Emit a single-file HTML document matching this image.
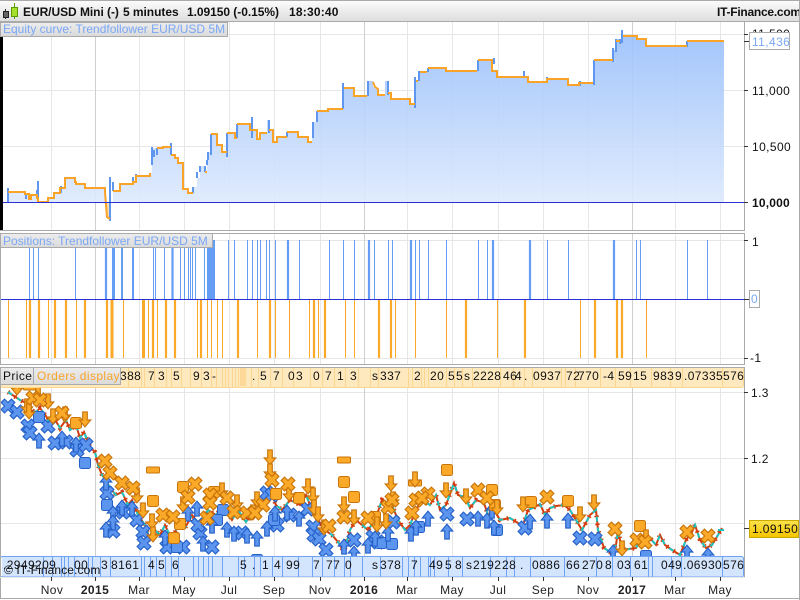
<!DOCTYPE html>
<html><head><meta charset="utf-8"><style>
html,body{margin:0;padding:0;background:#fff}
svg{display:block}
text{font-family:"Liberation Sans",sans-serif;font-size:12px;letter-spacing:.4px}
.chip text{fill:#111}
.tb{font-size:12px;font-weight:bold;letter-spacing:-.05px}
.tab{letter-spacing:0}
</style></head><body>
<svg width="800" height="600" viewBox="0 0 800 600" xmlns="http://www.w3.org/2000/svg">
<defs>
<linearGradient id="bar" x1="0" y1="0" x2="0" y2="1"><stop offset="0" stop-color="#fdfdfd"/><stop offset="1" stop-color="#dcdcdc"/></linearGradient>
<linearGradient id="tabg" x1="0" y1="0" x2="0" y2="1"><stop offset="0" stop-color="#ededed"/><stop offset="1" stop-color="#dadada"/></linearGradient>
<linearGradient id="eq" gradientUnits="userSpaceOnUse" x1="0" y1="31" x2="0" y2="202"><stop offset="0" stop-color="#98bffb" stop-opacity=".9"/><stop offset="1" stop-color="#dde9fd" stop-opacity=".9"/></linearGradient>
<linearGradient id="yel" x1="0" y1="0" x2="0" y2="1"><stop offset="0" stop-color="#fde24a"/><stop offset="1" stop-color="#f4c400"/></linearGradient>
<g id="oX" transform="scale(1.15)"><path d="M-3-6L0-3 3-6 6-3 3 0 6 3 3 6 0 3-3 6-6 3-3 0-6-3Z" fill="#fba928" stroke="#c8740a"/></g>
<g id="bX" transform="scale(1.15)"><path d="M-3-6L0-3 3-6 6-3 3 0 6 3 3 6 0 3-3 6-6 3-3 0-6-3Z" fill="#5c95ee" stroke="#2560c8"/></g>
<g id="oD" transform="scale(1.15)"><path d="M-2-7H2V0H5L0 6-5 0H-2Z" fill="#fba928" stroke="#c8740a"/></g>
<g id="bU" transform="scale(1.15)"><path d="M-2 7H2V0H5L0-6-5 0H-2Z" fill="#5c95ee" stroke="#2560c8"/></g>
<g id="oS"><rect x="-5.5" y="-5.5" width="11" height="11" rx="2" fill="#fba928" stroke="#c8740a"/></g>
<g id="bS"><rect x="-5.5" y="-5.5" width="11" height="11" rx="2" fill="#5c95ee" stroke="#2560c8"/></g>
<g id="oF"><rect x="-6.5" y="-3" width="13" height="6" rx="1" fill="#fba928" stroke="#c8740a"/></g>
<path id="ps" fill="none" d="M8 392L14 396 20 400 26 403 30 410 36 412 40 408 46 416 50 425 54 418 60 428 66 420 70 430 76 425 80 438 84 432 90 447 95 452 98 465 102 475 106 480 110 488 116 495 122 492 128 505 132 500 138 515 145 525 150 540 155 530 160 535 165 525 172 540 178 525 185 528 192 515 200 525 208 510 216 515 224 505 232 520 238 510 246 522 252 512 258 515 264 500 270 490 276 505 282 510 290 500 300 505 306 495 312 510 318 520 325 530 332 535 338 542 344 552 350 530 356 520 362 525 368 530 375 520 382 500 392 505 398 520 405 530 410 525 416 510 422 500 430 505 436 495 440 510 446 505 454 483 458 495 465 497 470 508 476 500 484 503 488 515 494 510 500 520 510 518 518 523 523 525 528 510 535 507 540 504 545 515 550 508 556 506 564 505 570 510 576 520 582 530 590 515 596 510 598 530 604 548 610 552 616 545 618 530 622 550 636 548 640 540 650 538 656 545 660 535 665 545 672 550 680 555 686 540 692 532 695 525 700 540 706 548 712 545 718 535 722 528"/>
<clipPath id="pc"><rect x="0" y="386" width="744" height="171"/></clipPath>
</defs>

<!-- top bar -->
<rect x="0" y="0" width="800" height="22" fill="url(#bar)"/>
<rect x="0" y="0" width="800" height="1" fill="#aaa"/>
<rect x="0" y="21" width="800" height="1" fill="#aaa"/>
<path d="M5.5 9V19" stroke="#333"/><rect x="3.5" y="11.5" width="5" height="6" fill="#666" stroke="#222"/>
<path d="M14.5 3V19" stroke="#5a9c00"/><rect x="11.5" y="7.5" width="6" height="9" fill="#a6e02a" stroke="#5a9c00"/>
<text x="23" y="16" class="tb" fill="#111">EUR/USD Mini (-)</text>
<text x="123" y="16" class="tb" fill="#111">5 minutes</text>
<text x="187" y="16" class="tb" fill="#111">1.09150 (-0.15%)</text>
<text x="289" y="16" class="tb" fill="#111" style="letter-spacing:.2px">18:30:40</text>
<text x="717" y="16" style="font-size:12px;font-weight:bold;letter-spacing:-.25px" fill="#111">IT-Finance.com</text>

<!-- grids -->
<g stroke="#e6e6e6" fill="none">
<path d="M51.5 22V230M139.5 22V230M184.5 22V230M229.5 22V230M274.5 22V230M320.5 22V230M407.5 22V230M452.5 22V230M498.5 22V230M543.5 22V230M588.5 22V230M675.5 22V230M720.5 22V230"/>
<path d="M51.5 233V364M139.5 233V364M184.5 233V364M229.5 233V364M274.5 233V364M320.5 233V364M407.5 233V364M452.5 233V364M498.5 233V364M543.5 233V364M588.5 233V364M675.5 233V364M720.5 233V364"/>
<path d="M51.5 367V577M139.5 367V577M184.5 367V577M229.5 367V577M274.5 367V577M320.5 367V577M407.5 367V577M452.5 367V577M498.5 367V577M543.5 367V577M588.5 367V577M675.5 367V577M720.5 367V577"/>
<path d="M0 34.5H744M0 90.5H744M0 146.5H744M0 240.5H744M0 358.5H744M0 392.5H744M0 458.5H744M0 523.5H744"/>
</g>
<g stroke="#cfcfcf" fill="none"><path d="M95.5 22V230M364.5 22V230M632.5 22V230M95.5 233V364M364.5 233V364M632.5 233V364M95.5 367V577M364.5 367V577M632.5 367V577"/></g>

<!-- equity area -->
<path d="M2 202H8V192H25V194H29V199H31V195H37V198H38V202H48V198H54V193H60V188H65V178H75V182H76V184H85V188H105V192L106 205 107 217 110 219V202H113V191H120V184H133V182H136V175H150V173H152V148H163V147H171V155H175V158H178V163H183V189H188V193H193V187H197V178H200V166H205V172H207V160H208V152H211V134H217V145H222V152H227V133H235V138H237V124H250V130H257V139H260V133H267V120H270V130H273V142H277V137H287V132H298V137H308V142H312V122H317V111H328V109H343V83H344V88H354V96H367V81H373V87H375V89H378V95H385V81H388V93H391V99H410V104H415V77H416V81H418V71H420V72H427V68H446V71H477V60H492V71H497V77H528V82H547V79H568V85H579V83H593V60H613V50H616V39H620V41H622V31H623V36H637V39H646V46H687V41H724V202Z" fill="url(#eq)"/>
<path d="M105 202L106 205 107 217 110 219V202Z" fill="#fbdcae"/>
<!-- blue rises -->
<path d="M8 202V188M26 199V194M37 197V190M38 199V181M48 203V197M54 198V193M61 193V186M65 188V178M110 221V177M113 191V182M120 191V184M133 184V177M136 182V174M152 165V147M154 157V150M157 155V148M171 155V143M193 193V187M197 178V172M200 172V166M205 172V166M207 160V165M208 160V152M211 155V134M227 157V133M237 138V124M252 138V117M269 133V120M287 137V132M313 138V122M317 122V111M328 112V108M343 109V83M368 96V81M388 95V81M415 108V77M419 81V71M428 72V68M478 71V60M494 64V58M524 77V71M547 82V77M580 86V81M594 85V60M613 62V48M616 52V39M620 44V39M622 43V30M687 47V41" stroke="#5f97f0" stroke-width="2" fill="none"/>
<!-- orange line -->
<path d="M8 192H25V194H29V199H31V195H37V198H38V202H48V198H54V193H60V188H65V178H75V182H76V184H85V188H105V192L106 205 107 217 110 219M113 191H120V184H133V182H136V176H150V173M157 148H163V147H171M171 155H175V158H178V163H183V189H188V193H193M205 172H207M211 134H217V145H222V152H227M227 133H235V138H237M237 124H250V130H257V139H260V133H267M269 130H273V142H277V137H287M287 132H298V137H308V142H312M317 111H328V109H343M344 88H354V96H367M373 82L375 87 378 89V95H385M388 93H391V99H410V104H415M416 81H418M420 72H427M428 68H446V71H477M478 60H492V71H497V77H528V82H547V79H568V85H579V83H593M594 60H613M616 41H620M623 36H637V39H646V46H687M687 41H724" stroke="#f9a329" stroke-width="2" fill="none"/>
<rect x="0" y="202" width="744" height="1" fill="#2a30d8"/>

<!-- positions bars -->
<path d="M29.5 240V299M33.5 240V299M38.5 240V299M75.5 240V299M121.5 240V299M122.5 240V299M132.5 240V299M133.5 240V299M153.5 240V299M155.5 240V299M164.5 240V299M180.5 240V299M184.5 240V299M188.5 240V299M190.5 240V299M192.5 240V299M195.5 240V299M204.5 240V299M228.5 240V299M234.5 240V299M247.5 240V299M252.5 240V299M257.5 240V299M260.5 240V299M266.5 240V299M269.5 240V299M275.5 240V299M299.5 240V299M329.5 240V299M343.5 240V299M354.5 240V299M374.5 240V299M388.5 240V299M392.5 240V299M415.5 240V299M419.5 240V299M428.5 240V299M446.5 240V299M478.5 240V299M487.5 240V299M547.5 240V299M568.5 240V299M636.5 240V299M640.5 240V299M687.5 240V299M707.5 240V299" stroke="#659cf5" fill="none"/>
<path d="M106 240V299M288 240V299M369 240V299M411 240V299M493 240V299M530 240V299M614 240V299M172.5 240V299" stroke="#659cf5" stroke-width="2.2" fill="none"/>
<path d="M113.5 240V299" stroke="#659cf5" stroke-width="3" fill="none"/>
<rect x="207" y="240" width="8" height="59" fill="#659cf5"/>
<path d="M8.5 300V358M26.5 300V358M48.5 300V358M76.5 300V358M123.5 300V358M148.5 300V358M157.5 300V358M197.5 300V358M207.5 300V358M211.5 300V358M217.5 300V358M222.5 300V358M257.5 300V358M275.5 300V358M289.5 300V358M309.5 300V358M318.5 300V358M345.5 300V358M354.5 300V358M395.5 300V358M415.5 300V358M446.5 300V358M497.5 300V358M580.5 300V358M646.5 300V358" stroke="#fba928" fill="none"/>
<path d="M30 300V358M39 300V358M55 300V358M66 300V358M85 300V358M107 300V358M153 300V358M166 300V358M175 300V358M201 300V358M238 300V358M270 300V358M314 300V358M325 300V358M379 300V358M391 300V358M466 300V358M525 300V358M595 300V358M617 300V358M622 300V358" stroke="#fba928" stroke-width="2.2" fill="none"/>
<path d="M112 300V358M143.5 300V358" stroke="#fba928" stroke-width="3" fill="none"/>
<rect x="0" y="299" width="744" height="1" fill="#2a30d8"/>

<!-- price -->
<g clip-path="url(#pc)">
<use href="#ps" stroke="#d53c0c" stroke-width="2"/>
<use href="#ps" stroke="#d53c0c" stroke-width="4.500" stroke-dasharray="1.500 6.500"/>
<use href="#ps" stroke="#1cc4c0" stroke-width="2" stroke-dasharray="5 6"/>
<path d="M718 530H724" stroke="#1cc4c0" stroke-width="2"/>
<g>
<use href="#bX" x="8" y="406"/><use href="#bX" x="17" y="412"/><use href="#bX" x="28" y="426"/><use href="#bX" x="30" y="433"/><use href="#bX" x="48" y="426"/><use href="#bX" x="55" y="443"/><use href="#bX" x="66" y="442"/><use href="#bX" x="77" y="450"/><use href="#bX" x="86" y="445"/><use href="#bX" x="107" y="493"/><use href="#bX" x="113" y="531"/><use href="#bX" x="123" y="512"/><use href="#bX" x="137" y="520"/><use href="#bX" x="143" y="532"/><use href="#bX" x="144" y="543"/><use href="#bX" x="167" y="547"/><use href="#bX" x="183" y="547"/><use href="#bX" x="212" y="547"/><use href="#bX" x="200" y="533"/><use href="#bX" x="198" y="525"/><use href="#bX" x="242" y="533"/><use href="#bX" x="267" y="493"/>
<use href="#bX" x="272" y="495"/><use href="#bX" x="277" y="525"/><use href="#bX" x="308" y="509"/><use href="#bX" x="313" y="527"/><use href="#bX" x="314" y="535"/><use href="#bX" x="319" y="539"/><use href="#bX" x="326" y="550"/><use href="#bX" x="354" y="540"/><use href="#bX" x="378" y="542"/><use href="#bX" x="373" y="537"/><use href="#bX" x="393" y="522"/><use href="#bX" x="447" y="514"/><use href="#bX" x="467" y="519"/><use href="#bX" x="525" y="528"/><use href="#bX" x="290" y="515"/><use href="#bX" x="580" y="538"/><use href="#bX" x="595" y="539"/>
<use href="#bS" x="39" y="417"/><use href="#bS" x="85" y="463"/><use href="#bS" x="107" y="505"/><use href="#bS" x="223" y="510"/><use href="#bS" x="217" y="520"/><use href="#bS" x="177" y="547"/><use href="#bS" x="274" y="520"/><use href="#bS" x="381" y="543"/><use href="#bS" x="392" y="544"/><use href="#bS" x="497" y="530"/><use href="#bS" x="419" y="527"/><use href="#bS" x="646" y="556"/><use href="#bS" x="257" y="560"/>
<use href="#bU" x="39" y="440"/><use href="#bU" x="62" y="438"/><use href="#bU" x="76" y="444"/><use href="#bU" x="106" y="482"/><use href="#bU" x="113" y="513"/><use href="#bU" x="113" y="522"/><use href="#bU" x="106" y="529"/><use href="#bU" x="122" y="507"/><use href="#bU" x="132" y="508"/><use href="#bU" x="188" y="513"/><use href="#bU" x="197" y="508"/><use href="#bU" x="165" y="537"/><use href="#bU" x="227" y="529"/><use href="#bU" x="234" y="533"/><use href="#bU" x="247" y="535"/><use href="#bU" x="257" y="538"/><use href="#bU" x="267" y="528"/><use href="#bU" x="203" y="543"/><use href="#bU" x="212" y="525"/>
<use href="#bU" x="275" y="513"/><use href="#bU" x="287" y="512"/><use href="#bU" x="299" y="518"/><use href="#bU" x="344" y="546"/><use href="#bU" x="368" y="545"/><use href="#bU" x="375" y="538"/><use href="#bU" x="388" y="533"/><use href="#bU" x="411" y="533"/><use href="#bU" x="416" y="527"/><use href="#bU" x="428" y="518"/><use href="#bU" x="447" y="531"/><use href="#bU" x="478" y="518"/><use href="#bU" x="487" y="520"/><use href="#bU" x="492" y="510"/><use href="#bU" x="494" y="527"/><use href="#bU" x="530" y="521"/><use href="#bU" x="354" y="553"/><use href="#bU" x="547" y="520"/><use href="#bU" x="568" y="520"/><use href="#bU" x="613" y="552"/><use href="#bU" x="687" y="552"/><use href="#bU" x="708" y="555"/>
</g>
<g>
<use href="#oF" x="30" y="387"/><use href="#oF" x="153" y="470"/><use href="#oF" x="344" y="460"/><use href="#oF" x="415" y="483"/>
<use href="#oS" x="76" y="423"/><use href="#oS" x="153" y="501"/><use href="#oS" x="183" y="487"/><use href="#oS" x="180" y="524"/><use href="#oS" x="174" y="538"/><use href="#oS" x="214" y="492"/><use href="#oS" x="276" y="494"/><use href="#oS" x="299" y="498"/><use href="#oS" x="344" y="482"/><use href="#oS" x="354" y="497"/><use href="#oS" x="375" y="517"/><use href="#oS" x="447" y="470"/><use href="#oS" x="492" y="490"/><use href="#oS" x="495" y="505"/><use href="#oS" x="531" y="502"/><use href="#oS" x="568" y="501"/><use href="#oS" x="640" y="526"/>
<use href="#oD" x="17" y="388"/><use href="#oD" x="38" y="395"/><use href="#oD" x="27" y="407"/><use href="#oD" x="48" y="402"/><use href="#oD" x="53" y="417"/><use href="#oD" x="65" y="415"/><use href="#oD" x="85" y="420"/><use href="#oD" x="29" y="412"/><use href="#oD" x="137" y="496"/><use href="#oD" x="143" y="511"/><use href="#oD" x="152" y="522"/><use href="#oD" x="183" y="505"/><use href="#oD" x="222" y="491"/><use href="#oD" x="237" y="503"/><use href="#oD" x="257" y="500"/><use href="#oD" x="270" y="458"/><use href="#oD" x="253" y="513"/><use href="#oD" x="153" y="535"/>
<use href="#oD" x="270" y="472"/><use href="#oD" x="308" y="487"/><use href="#oD" x="313" y="496"/><use href="#oD" x="314" y="508"/><use href="#oD" x="318" y="515"/><use href="#oD" x="324" y="528"/><use href="#oD" x="344" y="505"/><use href="#oD" x="354" y="518"/><use href="#oD" x="391" y="484"/><use href="#oD" x="386" y="522"/><use href="#oD" x="377" y="525"/><use href="#oD" x="415" y="480"/><use href="#oD" x="446" y="491"/><use href="#oD" x="466" y="497"/><use href="#oD" x="523" y="505"/><use href="#oD" x="497" y="508"/><use href="#oD" x="289" y="494"/><use href="#oD" x="393" y="500"/><use href="#oD" x="580" y="515"/><use href="#oD" x="594" y="503"/><use href="#oD" x="622" y="549"/><use href="#oD" x="646" y="538"/>
<use href="#oX" x="33" y="398"/><use href="#oX" x="40" y="400"/><use href="#oX" x="62" y="413"/><use href="#oX" x="105" y="461"/><use href="#oX" x="122" y="483"/><use href="#oX" x="133" y="488"/><use href="#oX" x="110" y="473"/><use href="#oX" x="195" y="484"/><use href="#oX" x="188" y="497"/><use href="#oX" x="210" y="495"/><use href="#oX" x="227" y="498"/><use href="#oX" x="207" y="518"/><use href="#oX" x="163" y="515"/><use href="#oX" x="173" y="517"/><use href="#oX" x="234" y="512"/><use href="#oX" x="247" y="513"/><use href="#oX" x="263" y="505"/><use href="#oX" x="210" y="503"/><use href="#oX" x="255" y="513"/>
<use href="#oX" x="288" y="484"/><use href="#oX" x="344" y="517"/><use href="#oX" x="329" y="526"/><use href="#oX" x="368" y="518"/><use href="#oX" x="388" y="507"/><use href="#oX" x="392" y="500"/><use href="#oX" x="412" y="513"/><use href="#oX" x="416" y="500"/><use href="#oX" x="428" y="494"/><use href="#oX" x="422" y="498"/><use href="#oX" x="478" y="490"/><use href="#oX" x="487" y="498"/><use href="#oX" x="272" y="480"/><use href="#oX" x="547" y="497"/><use href="#oX" x="615" y="529"/><use href="#oX" x="637" y="540"/><use href="#oX" x="645" y="542"/><use href="#oX" x="687" y="532"/><use href="#oX" x="708" y="536"/>
</g>
</g>

<!-- top chips -->
<g class="chip">
<path d="M0 367H743V385Q743 387 741 387H0Z" fill="#fee9bf"/>
<path d="M128.5 367V387M141.5 367V387M144.5 367V387M154.5 367V387M166.5 367V387M171.5 367V387M181.5 367V387M190.5 367V387M201.5 367V387M211.5 367V387M216.5 367V387M222.5 367V387M225.5 367V387M228.5 367V387M232.5 367V387M235.5 367V387M238.5 367V387M251.5 367V387M258.5 367V387M270.5 367V387M282.5 367V387M293.5 367V387M310.5 367V387M322.5 367V387M334.5 367V387M345.5 367V387M358.5 367V387M370.5 367V387M378.5 367V387M408.5 367V387M412.5 367V387M421.5 367V387M424.5 367V387M428.5 367V387M446.5 367V387M454.5 367V387M462.5 367V387M472.5 367V387M500.5 367V387M513.5 367V387M524.5 367V387M532.5 367V387M561.5 367V387M565.5 367V387M575.5 367V387M600.5 367V387M615.5 367V387M630.5 367V387M651.5 367V387M670.5 367V387M682.5 367V387M722.5 367V387" stroke="#fbd691" fill="none"/>
<rect x="240" y="368" width="6" height="18" fill="#fdd999"/>
<rect x="0.5" y="367.5" width="743" height="20" rx="2" fill="none" stroke="#fbd691"/>
<text x="120" y="380">388</text><text x="148" y="380">7</text><text x="158" y="380">3</text><text x="173" y="380">5</text><text x="193" y="380">9</text><text x="203" y="380">3</text><text x="212" y="380">-</text><text x="252" y="380">.</text><text x="260" y="380">5</text><text x="273" y="380">7</text><text x="288" y="380">0</text><text x="296" y="380">3</text><text x="313" y="380">0</text><text x="325" y="380">7</text><text x="337" y="380">1</text><text x="350" y="380">3</text><text x="372" y="380">s</text><text x="380" y="380">337</text><text x="414" y="380">2</text><text x="430" y="380">20</text><text x="448" y="380">5</text><text x="456" y="380">5</text><text x="464" y="380">s</text><text x="473" y="380">2228</text><text x="503" y="380">46</text><text x="515" y="380">4</text><text x="524" y="380">.</text><text x="533" y="380">0937</text><text x="566" y="380">72</text><text x="578" y="380">770</text><text x="603" y="380">-4</text><text x="618" y="380">59</text><text x="633" y="380">15</text><text x="653" y="380">983</text><text x="675" y="380">9</text><text x="684" y="380">.07335</text><text x="723" y="380">576</text>
</g>
<!-- tabs -->
<rect x="0.5" y="367.5" width="33" height="17" fill="url(#tabg)" stroke="#aaa"/>
<text x="3" y="380" fill="#111">Price</text>
<rect x="33.5" y="367.5" width="87" height="17" fill="url(#tabg)" stroke="#aaa"/>
<text x="37" y="380" fill="#f9a329">Orders display</text>

<!-- bottom chips -->
<g class="chip">
<path d="M2 556H741Q743 556 743 558V577H2Z" fill="#d3e4fd"/>
<path d="M43.5 556V577M52.5 556V577M61.5 556V577M64.5 556V577M68.5 556V577M74.5 556V577M88.5 556V577M92.5 556V577M100.5 556V577M110.5 556V577M141.5 556V577M144.5 556V577M150.5 556V577M156.5 556V577M165.5 556V577M171.5 556V577M178.5 556V577M193.5 556V577M198.5 556V577M203.5 556V577M208.5 556V577M212.5 556V577M222.5 556V577M238.5 556V577M244.5 556V577M254.5 556V577M260.5 556V577M272.5 556V577M282.5 556V577M298.5 556V577M312.5 556V577M322.5 556V577M334.5 556V577M344.5 556V577M350.5 556V577M362.5 556V577M380.5 556V577M402.5 556V577M408.5 556V577M414.5 556V577M420.5 556V577M428.5 556V577M430.5 556V577M434.5 556V577M448.5 556V577M462.5 556V577M490.5 556V577M506.5 556V577M514.5 556V577M530.5 556V577M564.5 556V577M596.5 556V577M612.5 556V577M630.5 556V577M648.5 556V577M652.5 556V577M671.5 556V577M681.5 556V577M722.5 556V577" stroke="#71a3f5" fill="none"/>
<rect x="0.5" y="556.5" width="743" height="20.500" rx="2" fill="none" stroke="#71a3f5"/>
<text x="3" y="569">.2949209</text><text x="74" y="569">00</text><text x="92" y="569">.</text><text x="101" y="569">3</text><text x="111" y="569">8161</text><text x="148" y="569">4</text><text x="158" y="569">5</text><text x="172" y="569">6</text><text x="240" y="569">5</text><text x="252" y="569">.</text><text x="262" y="569">1</text><text x="274" y="569">4</text><text x="286" y="569">99</text><text x="313" y="569">7</text><text x="326" y="569">77</text><text x="345" y="569">0</text><text x="372" y="569">s</text><text x="380" y="569">378</text><text x="411" y="569">7</text><text x="429" y="569">49</text><text x="445" y="569">5</text><text x="455" y="569">8</text><text x="466" y="569">s</text><text x="473" y="569">2192</text><text x="502" y="569">28</text><text x="520" y="569">.</text><text x="532" y="569">0886</text><text x="566" y="569">66</text><text x="582" y="569">270</text><text x="605" y="569">8</text><text x="617" y="569">03</text><text x="634" y="569">61</text><text x="661" y="569">04</text><text x="675" y="569">9</text><text x="683" y="569">.06930</text><text x="723" y="569">576</text>
</g>
<text x="4" y="574" fill="#111" style="letter-spacing:.1px">© IT-Finance.com</text>

<!-- panel borders -->
<g fill="none" stroke="#aaa">
<path d="M0.500 22V230.500H744.500V22"/>
<path d="M0.500 233.500H744.500V364.500H0.500Z"/>
<path d="M0.500 367.500H744.500V577.500"/>
<path d="M0.500 367V599M0 598.500H800M799.500 0V600"/>
</g>
<path d="M0 577.500H744.500" stroke="#e8e8e8"/>
<rect x="0" y="37" width="3" height="193" fill="#000"/>

<!-- equity tab -->
<rect x="0.500" y="22.500" width="227" height="14" fill="url(#tabg)" stroke="#aaa"/>
<text x="3" y="33" fill="#7aa7f5" class="tab">Equity curve: Trendfollower EUR/USD 5M</text>
<rect x="0.500" y="233.500" width="212" height="14" fill="url(#tabg)" stroke="#aaa"/>
<text x="3" y="245" fill="#7aa7f5" class="tab">Positions: Trendfollower EUR/USD 5M</text>

<!-- y axes -->
<g stroke="#333" fill="none"><path d="M744 34.500H748M744 41.500H749M744 90.500H748M744 146.500H748M744 202.500H748M744 240.500H748M744 299.500H749M744 358.500H748M744 392.500H748M744 458.500H748M744 528.500H749"/></g>
<text x="752" y="38" fill="#111">11,500</text>
<rect x="749.500" y="32.500" width="40" height="17" fill="#fff" stroke="#aaa"/>
<text x="752" y="46" fill="#7aa7f5">11,436</text>
<text x="752" y="95" fill="#111">11,000</text>
<text x="752" y="151" fill="#111">10,500</text>
<text x="752" y="207" fill="#111" style="font-weight:bold;letter-spacing:.2px">10,000</text>
<text x="752" y="246" fill="#111">1</text>
<rect x="749.500" y="290.500" width="10" height="17" fill="#fff" stroke="#aaa"/>
<text x="751" y="303" fill="#7aa7f5">0</text>
<text x="750" y="362" fill="#111">-1</text>
<text x="751" y="397" fill="#111">1.3</text>
<text x="751" y="463" fill="#111">1.2</text>
<rect x="749.500" y="520.500" width="49" height="17" fill="url(#yel)" stroke="#c9a800"/>
<text x="752" y="533" fill="#111">1.09150</text>

<!-- x axis -->
<path d="M51.500 577V581M95.500 577V581M139.500 577V581M184.500 577V581M229.500 577V581M274.500 577V581M320.500 577V581M364.500 577V581M407.500 577V581M452.500 577V581M498.500 577V581M543.500 577V581M588.500 577V581M632.500 577V581M675.500 577V581M720.500 577V581" stroke="#333"/>
<g fill="#222" text-anchor="middle">
<text x="52" y="594">Nov</text><text x="95" y="594" style="font-weight:bold">2015</text><text x="139" y="594">Mar</text><text x="184" y="594">May</text><text x="229" y="594">Jul</text><text x="274" y="594">Sep</text><text x="320" y="594">Nov</text><text x="364" y="594" style="font-weight:bold">2016</text><text x="407" y="594">Mar</text><text x="452" y="594">May</text><text x="498" y="594">Jul</text><text x="543" y="594">Sep</text><text x="588" y="594">Nov</text><text x="632" y="594" style="font-weight:bold">2017</text><text x="675" y="594">Mar</text><text x="720" y="594">May</text>
</g>
</svg>
</body></html>
